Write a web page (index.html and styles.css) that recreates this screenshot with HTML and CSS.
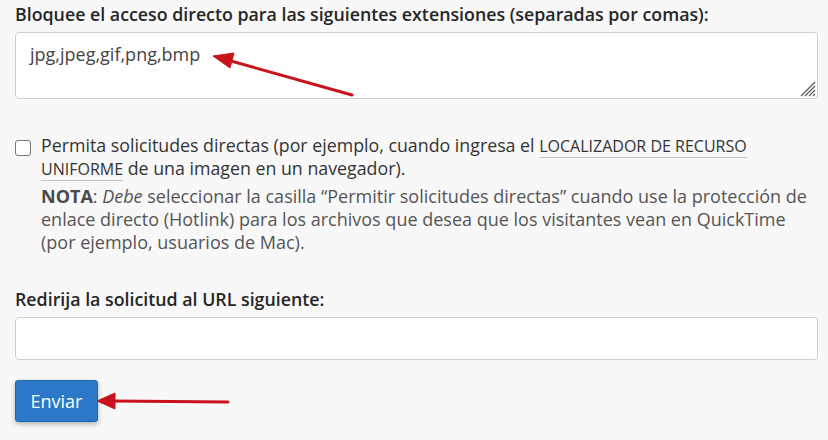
FILE: index.html
```html
<!DOCTYPE html>
<html lang="es">
<head>
<meta charset="utf-8">
<title>Hotlink</title>
<link rel="stylesheet" href="styles.css">
</head>
<body>
<form class="form">
  <div class="group">
    <label class="label" for="ext">Bloquee el acceso directo para las siguientes extensiones (separadas por comas):</label>
    <div class="ta-wrap">
      <textarea id="ext" class="textarea">jpg,jpeg,gif,png,bmp</textarea>
      <svg class="grip" width="18" height="18" viewBox="0 0 18 18">
        <path d="M17 3 L3 17 M17 7 L7 17 M17 11 L11 17 M17 15 L15 17" stroke="#555" stroke-width="1.1" fill="none"/>
      </svg>
    </div>
  </div>

  <div class="check-group">
    <input type="checkbox" class="checkbox" id="allow">
    <div class="check-text">
      <label class="check-label" for="allow">Permita solicitudes directas (por ejemplo, cuando ingresa el <abbr class="initialism" title="URL">Localizador de recurso uniforme</abbr> de una imagen en un navegador).</label>
      <p class="note"><strong>NOTA</strong>: <em>Debe</em> seleccionar la casilla “Permitir solicitudes directas” cuando use la protección de enlace directo (Hotlink) para los archivos que desea que los visitantes vean en QuickTime (por ejemplo, usuarios de Mac).</p>
    </div>
  </div>

  <div class="group group-url">
    <label class="label" for="url">Redirija la solicitud al URL siguiente:</label>
    <input type="text" id="url" class="input">
  </div>

  <button type="button" class="btn">Enviar</button>
</form>

<svg class="arrows" width="828" height="440" viewBox="0 0 828 440">
  <g fill="#c8121c" stroke="#c8121c">
    <line x1="231" y1="61" x2="352" y2="95" stroke-width="3" stroke-linecap="round"/>
    <polygon points="213,56 234,53 230,68" stroke-width="1" stroke-linejoin="round"/>
    <line x1="112" y1="401" x2="228" y2="402" stroke-width="3" stroke-linecap="round"/>
    <polygon points="97,401 115,393 115,409" stroke-width="1" stroke-linejoin="round"/>
  </g>
</svg>
</body>
</html>
```

FILE: styles.css
```css
html, body {
  margin: 0;
  padding: 0;
  background: #f8f8f8;
}

body {
  font-family: "Open Sans", "Noto Sans", "Liberation Sans", sans-serif;
  font-size: 17.8px;
  color: #333;
  width: 828px;
  height: 440px;
  overflow: hidden;
  position: relative;
}

.form {
  padding: 2px 10px 0 15px;
  display: flex;
  flex-direction: column;
  align-items: flex-start;
}

.group {
  display: flex;
  flex-direction: column;
  width: 100%;
}

.label {
  font-weight: 600;
  line-height: 24px;
  color: #262626;
  margin-bottom: 6px;
}

.ta-wrap {
  position: relative;
  width: 100%;
}

.textarea {
  display: block;
  box-sizing: border-box;
  width: 100%;
  height: 67px;
  padding: 9px 14px;
  border: 1px solid #cfcfcf;
  border-radius: 4px;
  background: #fff;
  font-family: inherit;
  font-size: 18px;
  line-height: 24px;
  color: #444;
  resize: none;
  outline: none;
}

.grip {
  position: absolute;
  right: 2px;
  bottom: 2px;
}

.check-group {
  display: flex;
  gap: 10px;
  margin-top: 35px;
  width: 100%;
}

.checkbox {
  appearance: none;
  -webkit-appearance: none;
  box-sizing: border-box;
  width: 16px;
  height: 16px;
  margin: 6px 0 0 0;
  border: 1.5px solid #767676;
  border-radius: 3px;
  background: #fff;
  flex: none;
}

.check-text {
  flex: 1;
}

.check-label {
  display: block;
  line-height: 22px;
  color: #333;
}

.initialism {
  font-size: 90%;
  text-transform: uppercase;
  text-decoration: none;
  border-bottom: 1px solid #c4c4c4;
}

.note {
  margin: 5px 0 0 0;
  font-size: 18px;
  line-height: 23px;
  color: #555;
}

.note strong {
  font-weight: 700;
  color: #4a4a4a;
}

.group-url {
  margin-top: 33px;
}

.input {
  box-sizing: border-box;
  width: 100%;
  height: 43px;
  padding: 6px 14px;
  border: 1px solid #cfcfcf;
  border-radius: 4px;
  background: #fff;
  font-family: inherit;
  font-size: 18px;
  outline: none;
}

.btn {
  margin-top: 20px;
  box-sizing: border-box;
  width: 83px;
  height: 42px;
  padding: 0;
  border: 1px solid #2467ad;
  border-radius: 3px;
  background: #2c78c8;
  color: #fff;
  font-family: inherit;
  font-size: 18px;
  box-shadow: 0 2px 5px rgba(0, 0, 0, 0.3);
}

.arrows {
  position: absolute;
  left: 0;
  top: 0;
  pointer-events: none;
}
```
